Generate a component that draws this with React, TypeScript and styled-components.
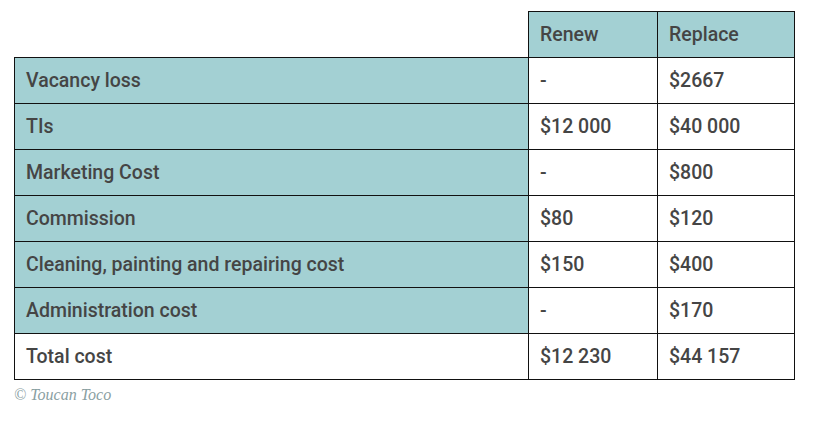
import React from "react";
import styled, { createGlobalStyle } from "styled-components";

const Global = createGlobalStyle`
  html, body { margin: 0; padding: 0; background: #ffffff; }
  body { font-family: Roboto, "Liberation Sans", sans-serif; }
`;

const Page = styled.div`
  padding: 11px 0 0 14px;
  display: flex;
  flex-direction: column;
  align-items: flex-start;
  gap: 6px;
`;

const Table = styled.table`
  border-collapse: collapse;
  table-layout: fixed;
  width: 780px;
  font-family: Roboto, "Liberation Sans", sans-serif;
  font-weight: 500;
  font-size: 19.5px;
  color: #454545;
`;

const Row = styled.tr`
  height: 46px;
`;

const Cell = styled.td<{ $teal?: boolean; $blank?: boolean }>`
  border: ${(p) => (p.$blank ? "none" : "1px solid #111111")};
  background: ${(p) => (p.$teal ? "#a3d0d3" : "transparent")};
  padding: 0 0 0 11px;
  vertical-align: middle;
  white-space: nowrap;
  box-sizing: border-box;
  text-align: left;
  font-weight: 500;
`;

const Footer = styled.div`
  font-family: "Liberation Serif", serif;
  font-style: italic;
  font-size: 16px;
  color: #8aa0a2;
`;

const rows: [string, string, string][] = [
  ["Vacancy loss", "-", "$2667"],
  ["TIs", "$12 000", "$40 000"],
  ["Marketing Cost", "-", "$800"],
  ["Commission", "$80", "$120"],
  ["Cleaning, painting and repairing cost", "$150", "$400"],
  ["Administration cost", "-", "$170"],
];

export default function App() {
  return (
    <>
      <Global />
      <Page>
        <Table>
          <colgroup>
            <col style={{ width: 514 }} />
            <col style={{ width: 129 }} />
            <col style={{ width: 137 }} />
          </colgroup>
          <thead>
            <Row>
              <Cell as="th" $blank />
              <Cell as="th" $teal>Renew</Cell>
              <Cell as="th" $teal>Replace</Cell>
            </Row>
          </thead>
          <tbody>
            {rows.map(([label, renew, replace]) => (
              <Row key={label}>
                <Cell $teal>{label}</Cell>
                <Cell>{renew}</Cell>
                <Cell>{replace}</Cell>
              </Row>
            ))}
            <Row>
              <Cell>Total cost</Cell>
              <Cell>$12 230</Cell>
              <Cell>$44 157</Cell>
            </Row>
          </tbody>
        </Table>
        <Footer>© Toucan Toco</Footer>
      </Page>
    </>
  );
}
